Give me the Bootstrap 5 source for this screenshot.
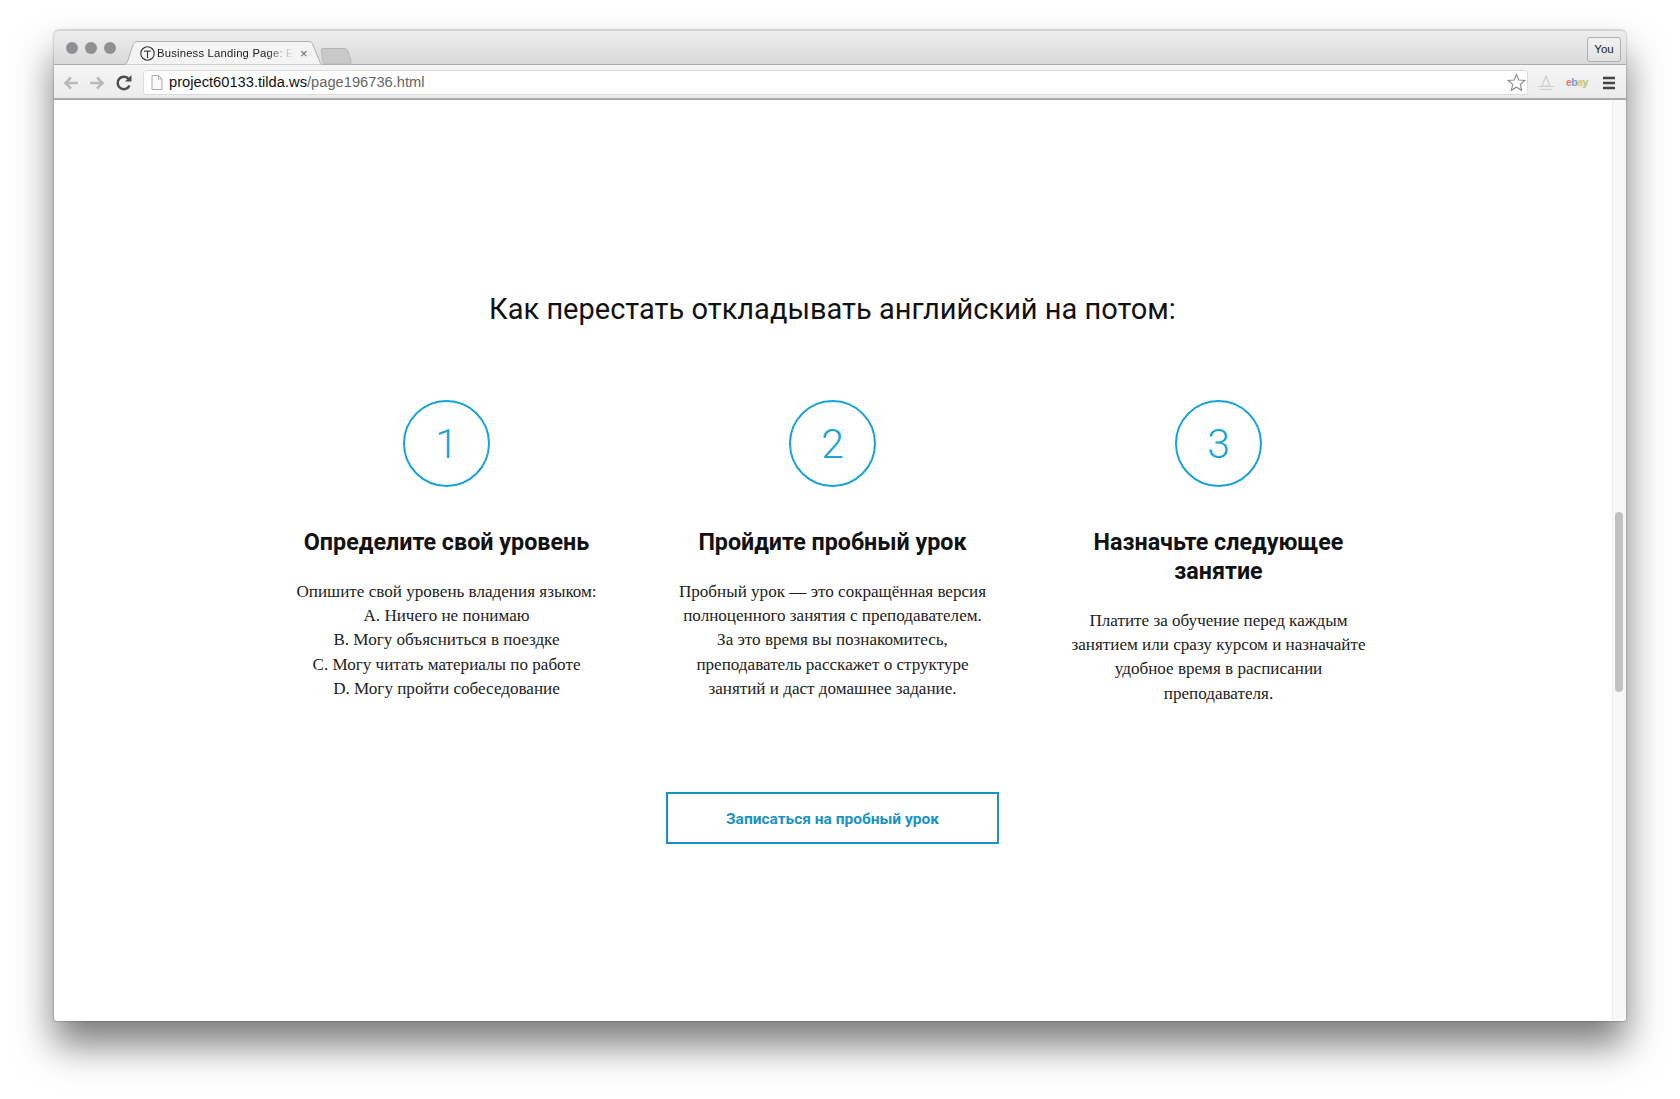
<!DOCTYPE html>
<html lang="ru">
<head>
  <meta charset="UTF-8" />
  <meta name="viewport" content="width=device-width, initial-scale=1.0"/>
  <title>Business Landing Page</title>
  <link href="https://cdn.jsdelivr.net/npm/bootstrap@5.3.0/dist/css/bootstrap.min.css" rel="stylesheet">
  <style>
    html, body { height: 1099px; overflow: hidden; background: #fff; }
    body { padding: 30px 54px 78px; font-family: "Liberation Sans", sans-serif; }
    .win { height: 991px; background: #fff; border-radius: 5px 5px 3px 3px; box-shadow: 0 24px 38px rgba(0,0,0,.52), 0 0 2px rgba(0,0,0,.45); overflow: visible; }
    .tabstrip { height: 35px; background: linear-gradient(#eeeeee, #d9d9d9); border-radius: 5px 5px 0 0; border-top: 1px solid #d0d0d0; border-bottom: 1px solid #ababab; padding-left: 12px; }
    .light { width: 12px; height: 12px; border-radius: 50%; background: #8f8f94; margin-right: 7px; }
    .tab { width: 212px; height: 24px; margin-left: -2px; margin-bottom: -1px; padding: 1px 0 0 19px; font-size: 11.3px; letter-spacing: .18px; color: #222; white-space: nowrap; }
    .tab-bg { position: absolute; left: 0; top: 0; }
    .tab-logo { width: 15px; height: 15px; flex: none; position: relative; }
    .tab-text { position: relative; width: 137px; margin-left: 2px; -webkit-mask-image: linear-gradient(90deg, #000 80%, rgba(0,0,0,.35) 92%, transparent); mask-image: linear-gradient(90deg, #000 80%, rgba(0,0,0,.35) 92%, transparent); }
    .tab-close { position: relative; margin-left: 6px; color: #666; font-size: 13px; line-height: 1; }
    .newtab { margin-left: -13px; margin-bottom: -1px; }
    .you-btn { width: 34px; height: 25px; margin-right: 5px; margin-top: 6px; border: 1px solid #b0b0b0; border-radius: 3px; background: linear-gradient(#f1f1f1, #e2e2e2); font-size: 11.5px; color: #222; }
    .toolbar { height: 35px; background: linear-gradient(#f5f5f5, #ececec); border-bottom: 2px solid #a9a9a9; padding: 2px 10px 0 5px; }
    .nav-ico { width: 24px; height: 24px; flex: none; }
    .nav-ico + .nav-ico { margin-left: 2px; }
    .nav-ico.reload { margin-left: 3px; }
    .addr { width: 1385px; height: 25px; margin-left: 7px; background: #fff; border: 1px solid #dcdcdc; border-radius: 3px; padding: 0 1px 0 7px; }
    .url { font-size: 14.7px; color: #111; margin-left: 6px; flex: 1; }
    .url span { color: #666; }
    .ebay { font-size: 10.5px; font-weight: 700; letter-spacing: -.5px; width: 20px; padding-left: 2px; }
    .ebay b:nth-child(1) { color: #e8727a; }
    .ebay b:nth-child(2) { color: #6f9fd8; }
    .ebay b:nth-child(3) { color: #eec35a; }
    .ebay b:nth-child(4) { color: #a3c96a; }
    .viewport { height: 921px; }
    .page-body { flex: 1; padding: 190px 1px 0 0; text-align: center; }
    .page-title { font-family: Roboto, sans-serif; font-size: 29px; font-weight: 400; line-height: 38px; color: #111; margin: 0 0 72px; }
    .steps { width: 1158px; }
    .step { width: 386px; flex: none; padding: 0 30px; }
    .step-num { width: 87px; height: 87px; padding-top: 2px; border: 2px solid #1aa3d6; border-radius: 50%; color: #1aa3d6; font-family: Roboto, sans-serif; font-weight: 300; font-size: 41px; margin: 0 auto 41px; }
    .step-title { font-family: Roboto, sans-serif; font-weight: 700; font-size: 23.3px; line-height: 29px; color: #111; margin: 0 10px 23px; }
    .step-text { font-family: "Liberation Serif", serif; font-size: 17.1px; line-height: 24.2px; color: #222; margin: 0; }
    .cta { width: 333px; height: 52px; margin-top: 86px; padding-top: 9px; border: 2px solid #1793c9; border-radius: 0; color: #1793c9; background: #fff; font-family: Roboto, sans-serif; font-weight: 700; font-size: 15.5px; }
    .sb-track { width: 14px; flex: none; background: #f8f8f8; border-left: 1px solid #eee; padding: 412px 3px 0 2px; border-bottom-right-radius: 3px; }
    .sb-thumb { height: 180px; background: #c1c1c1; border-radius: 4px; }
  </style>
</head>
<body>
  <div class="win d-flex flex-column">

    <!-- вкладки -->
    <div class="tabstrip d-flex align-items-end position-relative">
      <div class="d-flex align-self-center">
        <div class="light"></div><div class="light"></div><div class="light"></div>
      </div>
      <div class="tab position-relative d-flex align-items-center">
        <svg class="tab-bg" width="212" height="24" viewBox="0 0 212 24"><path d="M0 23.500 H2 C5 23.500 6 22 7 19 L12 4 C13 1.500 14 .5 17 .5 H187 C190 .5 191 1.500 192 4 L198 19 C199 22 200 23.500 203 23.500 H212" fill="#f4f4f4" stroke="#b0b0b0"/></svg>
        <svg class="tab-logo" viewBox="0 0 15 15"><circle cx="7.500" cy="7.500" r="6.700" fill="none" stroke="#333" stroke-width="1.100"/><path d="M4.200 5.600 C5 4.400 6 5.300 7.500 5.300 C9 5.300 10 4.500 10.800 5.400 M7.500 5.300 V12" fill="none" stroke="#333" stroke-width="1.100"/></svg>
        <span class="tab-text">Business Landing Page: En</span>
        <span class="tab-close">×</span>
      </div>
      <svg class="newtab" width="32" height="17" viewBox="0 0 32 17"><path d="M3 .5 H24 C26 .5 27 1.500 28 3.500 L31 13 C31.500 15 30.500 16 29 16 H6 C4.500 16 3.500 15 3 13 L1.500 3 C1 1.500 1.500 .5 3 .5 Z" fill="#c9c9c9" stroke="#b5b5b5"/></svg>
      <div class="you-btn ms-auto align-self-start d-flex align-items-center justify-content-center">You</div>
    </div>

    <!-- адресная строка -->
    <div class="toolbar d-flex align-items-center">
      <svg class="nav-ico" viewBox="0 0 24 24"><path d="M19 12 H7 M12 6.500 L6.500 12 L12 17.500" fill="none" stroke="#b9b9b9" stroke-width="2.600"/></svg>
      <svg class="nav-ico" viewBox="0 0 24 24"><path d="M5 12 H17 M12 6.500 L17.500 12 L12 17.500" fill="none" stroke="#b9b9b9" stroke-width="2.600"/></svg>
      <svg class="nav-ico reload" viewBox="0 0 24 24"><path d="M17.500 14.500 A6.200 6.200 0 1 1 16.800 8.200" fill="none" stroke="#4d4d4d" stroke-width="2.500"/><path d="M13 10.500 H19.500 V4 Z" fill="#4d4d4d"/></svg>
      <div class="addr d-flex align-items-center">
        <svg width="12" height="15" viewBox="0 0 12 15"><path d="M1 .5 H7.500 L11 4 V14.500 H1 Z M7.500 .5 V4 H11" fill="#fafafa" stroke="#aaa"/></svg>
        <div class="url">project60133.tilda.ws<span>/page196736.html</span></div>
        <svg width="19" height="19" viewBox="0 0 19 19"><path d="M9.500 1.500 L11.900 7 L17.800 7.500 L13.300 11.400 L14.700 17.300 L9.500 14.200 L4.300 17.300 L5.700 11.400 L1.200 7.500 L7.100 7 Z" fill="#fff" stroke="#8b8b8b" stroke-width="1.100"/></svg>
      </div>
      <svg class="ms-2" width="20" height="18" viewBox="0 0 20 18"><path d="M10 2 L14 12 H6 Z M2 12.500 H18 M4 15.500 H16" fill="none" stroke="#cfcfcf" stroke-width="1.200"/></svg>
      <div class="ebay ms-2 d-flex"><b>e</b><b>b</b><b>a</b><b>y</b></div>
      <svg class="ms-auto" width="14" height="14" viewBox="0 0 14 14"><path d="M1 2 H13 M1 7 H13 M1 12 H13" stroke="#444" stroke-width="2.500"/></svg>
    </div>

    <!-- страница -->
    <div class="viewport d-flex">
      <div class="page-body d-flex flex-column align-items-center">
        <h1 class="page-title">Как перестать откладывать английский на потом:</h1>
        <div class="steps d-flex">
          <div class="step">
            <div class="step-num d-flex align-items-center justify-content-center">1</div>
            <h3 class="step-title">Определите свой уровень</h3>
            <p class="step-text">Опишите свой уровень владения языком:<br>A. Ничего не понимаю<br>B. Могу объясниться в поездке<br>C. Могу читать материалы по работе<br>D. Могу пройти собеседование</p>
          </div>
          <div class="step">
            <div class="step-num d-flex align-items-center justify-content-center">2</div>
            <h3 class="step-title">Пройдите пробный урок</h3>
            <p class="step-text">Пробный урок — это сокращённая версия<br>полноценного занятия с преподавателем.<br>За это время вы познакомитесь,<br>преподаватель расскажет о структуре<br>занятий и даст домашнее задание.</p>
          </div>
          <div class="step">
            <div class="step-num d-flex align-items-center justify-content-center">3</div>
            <h3 class="step-title">Назначьте следующее занятие</h3>
            <p class="step-text">Платите за обучение перед каждым<br>занятием или сразу курсом и назначайте<br>удобное время в расписании<br>преподавателя.</p>
          </div>
        </div>
        <button class="btn cta">Записаться на пробный урок</button>
      </div>
      <div class="sb-track"><div class="sb-thumb"></div></div>
    </div>
  </div>
  <script src="https://cdn.jsdelivr.net/npm/bootstrap@5.3.0/dist/js/bootstrap.bundle.min.js"></script>
</body>
</html>
